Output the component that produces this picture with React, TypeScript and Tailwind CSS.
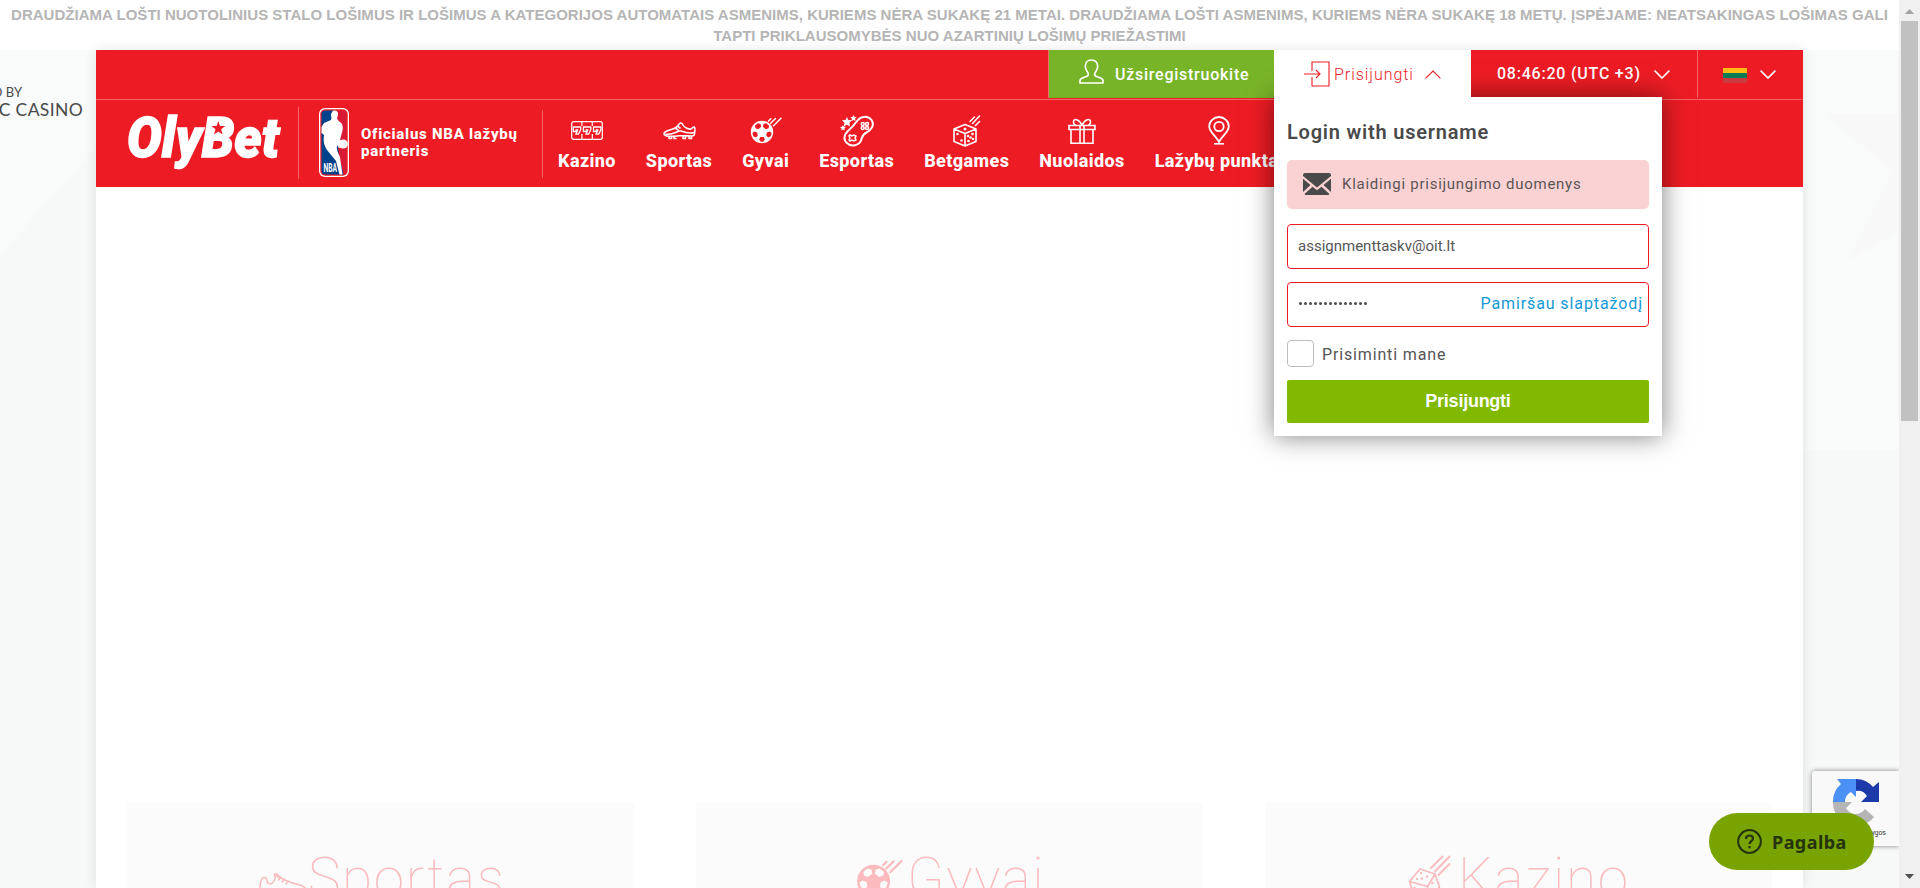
import React from "react";

const KazinoIcon = () => (
  <svg width="32" height="19" viewBox="0 0 32 19" fill="none" stroke="white" strokeWidth="1.2">
    <rect x="0.7" y="0.7" width="30.6" height="17.6" rx="2" />
    <path d="M10.900 1v4m0 8v5M21.300 1v4m0 8v5" />
    <g strokeWidth="1.300" strokeLinejoin="round">
      <path d="M2.300 6h7.400v2.500L7.500 13.200H4.800L6.800 9H5v1.500H2.300z" />
      <path d="M12.400 6h7.400v2.500l-2.200 4.700h-2.700l2-4.200h-1.800v1.500h-2.700z" />
      <path d="M22.500 6h7.400v2.500l-2.200 4.700H25l2-4.200h-1.800v1.500h-2.700z" />
    </g>
  </svg>
);

const ShoeIcon = () => (
  <svg width="33" height="18" viewBox="0 0 33 18" fill="none" stroke="white" strokeWidth="1.6" strokeLinejoin="round" strokeLinecap="round">
    <path d="M1 11.500C2 8 9 8.500 13 5.500 15 4 16 1.500 17.500 1c1.500-.4 2 .7 2.500 2 1.500 3 6 4.500 8 4 1.500-.5 2-2.500 3.300-2 .9.600.5 5 .2 7-.2 1.500-1 2-2.500 2-5 0-8-.5-13-.2-5 .4-15 1.700-15-2.300z" />
    <path d="M3 12.200c8 1 11-3.700 15-3.200 4 1.500 8 3 13 1.500M13 6.500l2 1.500M15 4.500l2 1.500" />
    <path d="M6 14.500v2h2.500v-2M11 14.500v2h2M20 14.500v2h2.500v-2M26 14.500v2h2.500v-2" strokeWidth="1.600" />
  </svg>
);

const SneakerIcon = () => (
  <svg className="mt-[29px] shrink-0" width="50" height="34" viewBox="0 0 50 34" fill="none" stroke="currentColor" strokeWidth="1.500" strokeLinejoin="round" strokeLinecap="round">
    <path d="M2 24C1.500 17 2 12 4 7c3-1.500 5 0 5 2.500 0 3 3 4.500 5.500 2.500C17.500 9 18 6.500 16.500 4.500c-.7-1.500.8-2.500 2.300-1.500 3.500 5 9.500 7 14.500 8.500 4.500 2 9.500 2 12.500 4.500 4 2 3.500 8 1 8z" />
    <path d="M20.500 9l2.500-3M24 11l2.500-3M28 13l2-3M18 4.500l4 3" />
  </svg>
);

const BallIcon = ({ className = "", id }: { className?: string; id: string }) => (
  <svg className={className} width="32" height="27" viewBox="0 0 32 27" fill="none" stroke="currentColor" strokeWidth="1.500">
    <mask id={id}>
      <rect width="32" height="27" fill="white" stroke="none" />
      <g fill="black" stroke="none">
        <path d="M8 6.300l2.500.8.700 2.700-3 2.400-2.800-1L5 8.500zM16 6.300l-2.500.8-.7 2.700 3 2.400 2.800-1L19 8.500z" />
        <path d="M4.300 14.500l2.800 1 .7 3.200-2 1.700-2.500-1.200-.9-3.200zM19.700 14.500l-2.800 1-.7 3.200 2 1.700 2.500-1.200.9-3.200zM10.300 20h3.400l1.200 2.800L13 24.700h-2l-1.900-1.900z" />
      </g>
    </mask>
    <circle cx="12" cy="15" r="11.200" fill="currentColor" stroke="none" mask={`url(#${id})`} />
    <path d="M18.500 4l2.300-2.300M20.700 6.300L25.500 1.500M23.500 8.800L31 1.200" strokeLinecap="round" />
  </svg>
);

const GamepadIcon = () => (
  <svg width="34" height="32" viewBox="0 0 34 32" fill="none" stroke="white" strokeWidth="2">
    <path d="M17.500 5.500C21 1 28 .500 31.500 5c3.500 5-.5 10.500-5 12.500-4.500 2-4 4-5.500 8-2 5-9.500 6.500-13.500 3C3.500 25.500 3.500 20.500 7 17c4-3.500 7.500-7.500 10.500-11.500z" />
    <g strokeWidth="1.500">
      <circle cx="22.700" cy="9" r="1.500" /><circle cx="27" cy="9" r="1.500" />
      <circle cx="22.700" cy="13" r="1.500" /><circle cx="27" cy="13" r="1.500" />
      <path d="M10 20l2 1 2-1 2 1-1 2 1 2-2 1-2-1-2 1-1-1 1-2-1-2z" />
    </g>
    <path fill="white" stroke="none" d="M7 2l1.400 3 3.600.300-2.600 2.500.7 3.600L7 9.700l-3.200 1.700.7-3.600L1.900 5.300 5.500 5zM13.500 0l1 2 2.200.300-1.600 1.500.4 2.200-2-1-2 1 .4-2.200-1.600-1.500 2.200-.3zM3 10l.9 1.800 2 .3-1.500 1.400.4 2L3 14.500l-1.800 1 .4-2L0 12.100l2-.3z" />
  </svg>
);

const DiceIcon = () => (
  <svg width="28" height="32" viewBox="0 0 28 32" fill="none" stroke="white" strokeWidth="1.600" strokeLinejoin="round" strokeLinecap="round">
    <path d="M12 9.500L23 14v12.500L12 31 1 26.500V14zM1 14l11 4.500L23 14M12 18.500V31" />
    <path d="M17 6.500L21.500 2M19.500 8.500L26.500 1M22.500 10.500l4-4" strokeWidth="1.500" />
    <g fill="white" stroke="none">
      <circle cx="12" cy="14" r="1.500" /><circle cx="4.500" cy="19" r="1.300" /><circle cx="8.500" cy="25.500" r="1.300" />
      <circle cx="19.500" cy="19" r="1.300" /><circle cx="17.500" cy="22.500" r="1.300" /><circle cx="15.500" cy="26" r="1.300" /><circle cx="20" cy="24" r="1.200" /><circle cx="15" cy="21" r="1.200" />
    </g>
  </svg>
);

const RollingDiceIcon = () => (
  <svg className="mt-[13px] mr-[7px] shrink-0" width="43" height="46" viewBox="0 0 43 46" fill="none" stroke="currentColor" strokeWidth="1.700" strokeLinejoin="round" strokeLinecap="round">
    <path d="M1.500 26.500L12 14l15 5-7.500 12.500zM27 19l4.500 13L22 43l-2.500-11.500M1.500 26.500L6 40l16 3" />
    <path d="M23 13L34.500 1.500M27 16.500L41.500 1.500M30.500 20L41.500 9" strokeWidth="1.900" />
    <g fill="currentColor" stroke="none">
      <circle cx="13" cy="18" r="1.200" /><circle cx="19" cy="21.500" r="1.200" /><circle cx="9" cy="24" r="1.200" /><circle cx="14" cy="23.500" r="1.200" />
      <circle cx="24.500" cy="28" r="1.200" /><circle cx="6.500" cy="33" r="1.200" /><circle cx="14" cy="36" r="1.200" />
    </g>
  </svg>
);

const GiftIcon = () => (
  <svg width="28" height="26" viewBox="0 0 28 26" fill="none" stroke="white" strokeWidth="1.600">
    <path d="M1 7.500h26v4H1zM3 11.500h22v13.700H3zM12 8v17M16 8v17M14 7C11 1 6 0 5.500 3.500 5.300 6 7 7 8 7M14 7c3-6 8-7 8.500-3.500C22.700 6 21 7 20 7" />
  </svg>
);

const PinIcon = () => (
  <svg width="22" height="29" viewBox="0 0 22 29" fill="none" stroke="white" strokeWidth="1.800">
    <path d="M11 26C8 20 1.200 16 1.200 10.500a9.800 9.500 0 0 1 19.600 0C20.800 16 14 20 11 26z" />
    <circle cx="11" cy="10.500" r="4.700" />
    <path d="M6 27.800h10" strokeWidth="1.600" />
  </svg>
);

const Chevron = ({ up = false }: { up?: boolean }) => (
  <svg width="16" height="9" viewBox="0 0 16 9" fill="none" stroke="currentColor" strokeWidth={up ? 1.1 : 1.6}>
    <path d={up ? "M.6 8.400L8 1l7.400 7.400" : "M.6.600L8 8 15.400.600"} />
  </svg>
);

const OlyBetLogo = () => (
  <svg width="160" height="62" viewBox="0 0 160 62" className="shrink-0">
    <text x="-1" y="45" fontFamily="Roboto, sans-serif" fontStyle="italic" fontWeight="900" fontSize="56" textLength="152" lengthAdjust="spacingAndGlyphs" fill="white" stroke="white" strokeWidth="1.500">OlyBet</text>
    <circle cx="90" cy="16.500" r="8" fill="white" />
    <path fill="#ed1c24" d="M90.300 9l1.700 5h5.300l-4.200 3.300 1.500 5.200-4.300-3.100-4.300 3.100 1.500-5.200L83.300 14h5.300z" />
  </svg>
);

const NbaLogo = () => (
  <svg width="30" height="69" viewBox="0 0 30 69" className="mt-px shrink-0">
    <rect width="30" height="69" rx="6" fill="white" />
    <rect x="1.300" y="1.300" width="27.400" height="66.400" rx="5" fill="#ed1c24" />
    <path d="M6.500 2.500H16L20 35l4.500 31.500h-18a4 4 0 0 1-4-4v-56a4 4 0 0 1 4-4z" fill="#00438c" />
    <path d="M15 2.500h9a3.500 3.500 0 0 1 3.500 3.500v56.500a4 4 0 0 1-3 4L20 48z" fill="#d91a35" />
    <path d="M14 2.500c3-.500 5.500 1 5 4L18 10.500l2 3c3 1 4.500 4.500 3.500 9L21 32l3 1.500v5L20 40l-2-3c-1 4 1 8 3 12l2.500 17.500h-3L17 53 8 42c-3-4-4-9-3-15l-2.500-2v-6L5 15l7-3c1-2 0-3 0-6z" fill="white" />
    <circle cx="24.300" cy="36" r="4.600" fill="white" />
    <text x="4.500" y="63.500" fontFamily="Roboto, sans-serif" fontWeight="700" fontSize="13" textLength="13.500" lengthAdjust="spacingAndGlyphs" fill="white">NBA</text>
  </svg>
);

const NavItem = ({ icon, label }: { icon: React.ReactNode; label: string }) => (
  <a className="flex shrink-0 flex-col items-center px-[15px] text-white">
    <span className="flex h-[35px] items-center justify-center">{icon}</span>
    <span className="whitespace-nowrap text-[18px] leading-[26px] font-[850] tracking-[0.400px]">{label}</span>
  </a>
);

const Tile = ({ icon, label, pad }: { icon: React.ReactNode; label: string; pad: string }) => (
  <section className={`flex h-[85px] w-[507px] overflow-hidden bg-[#fbfbfb] pt-[39px] text-[#fbbabd] ${pad}`}>
    {icon}
    <span className="mt-px text-[55px] leading-[70px] font-[270] tracking-[1.600px]">{label}</span>
  </section>
);

const LoginPanel = () => (
  <div className="absolute top-[47px] left-0 h-[339px] w-[388px] bg-white px-[13px] pt-[21px] text-[#4a4a4a] shadow-[0_0_25px_rgba(0,0,0,0.5)]">
    <h2 className="text-[20px] leading-[28px] font-[600] tracking-[0.780px]">Login with username</h2>
    <div className="mt-[14px] flex h-[49px] items-center rounded-[5px] bg-[#fbd2d3] pl-4">
      <svg className="-mt-px" width="28" height="22" viewBox="0 0 28 22" fill="#4a4a4a">
        <path d="M2 0h24a2 2 0 0 1 2 2v1L14 14.500 0 3V2a2 2 0 0 1 2-2zM0 5.700l7.500 6.300L0 19zM28 5.700L20.500 12l7.500 7zM1.500 21l8-7.300 4.500 3.500 4.500-3.500 8 7.300-1 1h-23z" />
      </svg>
      <span className="ml-[11px] text-[15px] tracking-[0.730px] text-[#5a5555]">Klaidingi prisijungimo duomenys</span>
    </div>
    <div className="mt-[15px] flex h-[45px] items-center rounded-[4px] border border-[#ed1c24] px-[10px] text-[15px] text-[#555]">
      assignmenttaskv@oit.lt
    </div>
    <div className="mt-[13px] flex h-[45px] items-center justify-between rounded-[4px] border border-[#ed1c24] pr-[5px] pb-[2px] pl-[11px]">
      <span className="flex gap-[2px]">
        {Array.from({ length: 14 }, (_, i) => (
          <i key={i} className="size-[3px] rounded-full bg-[#4a4a4a]" />
        ))}
      </span>
      <span className="text-[16px] tracking-[0.900px] text-[#1499d6]">Pamiršau slaptažodį</span>
    </div>
    <div className="mt-[13px] flex h-[27px] items-center gap-2">
      <span className="size-[27px] rounded-[4px] border border-[#bdbdbd]" />
      <span className="mt-[2px] text-[16px] tracking-[0.850px] text-[#555]">Prisiminti mane</span>
    </div>
    <div className="mt-[13px] flex h-[43px] items-center justify-center rounded-[2px] bg-[#80b900] text-[18px] font-bold tracking-[-0.250px] text-white [font-family:'Liberation_Sans',sans-serif]">
      Prisijungti
    </div>
  </div>
);

export default function App() {
  return (
    <div className="relative flex h-[888px] w-[1920px] overflow-hidden bg-white [font-family:Roboto,sans-serif]">
      <div className="flex w-[1899px] flex-col">
        <p className="h-[50px] pt-[4px] text-center text-[15px] leading-[21px] font-bold tracking-[0.015px] whitespace-nowrap text-[#b5b5b5] [font-family:'Liberation_Sans',sans-serif]">
          DRAUDŽIAMA LOŠTI NUOTOLINIUS STALO LOŠIMUS IR LOŠIMUS A KATEGORIJOS AUTOMATAIS ASMENIMS, KURIEMS NĖRA SUKAKĘ 21 METAI. DRAUDŽIAMA LOŠTI ASMENIMS, KURIEMS NĖRA SUKAKĘ 18 METŲ. ĮSPĖJAME: NEATSAKINGAS LOŠIMAS GALI
          <br />
          TAPTI PRIKLAUSOMYBĖS NUO AZARTINIŲ LOŠIMŲ PRIEŽASTIMI
        </p>
        <div className="relative flex h-[838px] bg-[#f7f9f8]">
          <aside className="relative w-24 overflow-hidden">
            <svg className="absolute inset-0" width="96" height="838">
              <path d="M0 0h96v98L0 205z" fill="#f9fbfa" />
            </svg>
            <div className="relative flex flex-col items-end pt-[33px] text-[#4a4a4a] [font-family:Lato,sans-serif]">
              <span className="mr-[74px] text-[13px] leading-[18px] whitespace-nowrap">POWERED BY</span>
              <span className="mr-[13px] text-[17.500px] leading-[18px] tracking-[0.350px] whitespace-nowrap">OLYMPIC CASINO</span>
            </div>
          </aside>
          <main className="relative z-10 flex w-[1707px] flex-col bg-white shadow-[0_0_12px_rgba(0,0,0,0.1)]">
            <header className="flex h-[137px] flex-col bg-[#ed1c24]">
              <div className="relative z-20 flex h-[50px] justify-end border-b border-[#f5656b] text-white">
                <div className="flex h-12 w-[226px] items-center border-l border-[#f5656b] bg-[#78b428] pl-[30px]">
                  <svg className="-mt-[5px]" width="25" height="25" viewBox="0 0 25 25" fill="none" stroke="white" strokeWidth="1.700" strokeLinejoin="round">
                    <path d="M12.500 1C8.500 1 6.300 3.700 6.300 7.200c0 3 1.700 5 2.700 6.800.8 1.700.3 2.800-1.500 3.500-3 1.200-6.300 1.500-6.500 4v2.500h23v-2.500c-.2-2.500-3.500-2.800-6.500-4-1.800-.7-2.300-1.800-1.500-3.500 1-1.800 2.700-3.800 2.700-6.800C18.700 3.700 16.500 1 12.500 1z" />
                  </svg>
                  <span className="mt-[2px] ml-[11px] text-[16px] font-medium tracking-[0.750px]">Užsiregistruokite</span>
                </div>
                <div className="relative h-12 w-[197px]">
                  <LoginPanel />
                  <div className="relative flex h-full items-center bg-white pl-[30px] text-[#ed1c24]">
                    <svg width="26" height="26" viewBox="0 0 26 26" fill="none" stroke="currentColor" strokeWidth="1.100">
                      <path d="M8 10V1h17v24H8v-9M0 13h16M12 9l4 4-4 4" />
                    </svg>
                    <span className="mt-[2px] ml-[4px] text-[16px] font-[360] tracking-[0.950px]">Prisijungti</span>
                    <span className="ml-[11px]"><Chevron up /></span>
                  </div>
                </div>
                <div className="flex h-12 w-[226px] items-center pl-[26px]">
                  <span className="text-[16px] font-medium tracking-[0.780px] whitespace-nowrap">08:46:20 (UTC +3)</span>
                  <span className="ml-[13px]"><Chevron /></span>
                </div>
                <div className="flex h-12 w-[106px] items-center border-l border-[#f5656b] pl-[25px]">
                  <span className="mt-[3px] flex h-[15px] w-6 flex-col">
                    <i className="h-[5px] bg-[#fdbb13]" />
                    <i className="h-[5px] bg-[#087b57]" />
                    <i className="h-[5px] bg-[#c93b3d]" />
                  </span>
                  <span className="ml-[13px]"><Chevron /></span>
                </div>
              </div>
              <div className="flex h-[87px] overflow-hidden">
                <div className="flex w-[202px] pt-[12px] pl-8"><OlyBetLogo /></div>
                <div className="mt-[7px] flex h-[72px] w-[244px] border-l border-[#f5656b] pl-5">
                  <NbaLogo />
                  <p className="mt-[19px] ml-[12px] text-[15px] leading-[17px] font-[800] tracking-[0.740px] whitespace-nowrap text-white">Oficialus NBA lažybų<br />partneris</p>
                </div>
                <nav className="mt-[10px] flex h-[68px] border-l border-[#f5656b] pt-[3px]">
                  <NavItem icon={<KazinoIcon />} label="Kazino" />
                  <NavItem icon={<ShoeIcon />} label="Sportas" />
                  <NavItem icon={<BallIcon id="nav-ball" className="text-white" />} label="Gyvai" />
                  <NavItem icon={<GamepadIcon />} label="Esportas" />
                  <NavItem icon={<DiceIcon />} label="Betgames" />
                  <NavItem icon={<GiftIcon />} label="Nuolaidos" />
                  <NavItem icon={<PinIcon />} label="Lažybų punktai" />
                </nav>
              </div>
            </header>
            <div className="mt-[616px] flex justify-between px-[31px]">
              <Tile label="Sportas" pad="pl-[131px]" icon={<SneakerIcon />} />
              <Tile label="Gyvai" pad="pl-[160px]" icon={<BallIcon id="tile-ball" className="mt-[17px] mr-[4px] h-[40px] w-[47px] shrink-0" />} />
              <Tile label="Kazino" pad="pl-[143px]" icon={<RollingDiceIcon />} />
            </div>
          </main>
          <aside className="relative flex-1 overflow-hidden">
            <svg width="96" height="838">
              <path d="M0 0h96v838H0z" fill="#f9fbfa" />
              <path d="M23 64h73v117L46 210 89 121z" fill="#f7f8f7" />
              <path d="M0 400h96v438H0z" fill="#f7f9f8" />
            </svg>
          </aside>
          <div className="absolute top-[721px] right-0 z-20 h-[75px] w-[87px] rounded-l-[3px] bg-[#f9f9f9] shadow-[0_0_5px_gray] [clip-path:inset(-8px_0_-8px_-8px)]">
            <svg className="absolute top-[8px] left-[21px]" width="46" height="46" viewBox="0 0 46 46">
              <path fill="#4a90f5" d="M0 23A23 23 0 0 1 8 5L4 0h19v18l-5-5a11 11 0 0 0-6 10z" />
              <path fill="#1c3aa9" d="M23 0a23 23 0 0 1 17 8l6-5v20H28l6-6a11 11 0 0 0-11-5z" />
              <path fill="#b5b5b5" d="M0 23h19l-6 6a11 11 0 0 0 19 1l9 8A23 23 0 0 1 0 23z" />
            </svg>
            <span className="absolute top-[57px] right-[13px] text-[7px] leading-[10px] whitespace-nowrap text-[#333]">Sąlygos</span>
          </div>
          <div className="absolute top-[763px] left-[1709px] z-30 flex h-[57px] w-[165px] items-center rounded-full bg-[#78a300] pl-7 text-[#25330f]">
            <svg width="25" height="25" viewBox="0 0 25 25" fill="none" stroke="currentColor" strokeWidth="2">
              <circle cx="12.500" cy="12.500" r="11.400" />
              <path d="M9 10c0-2.300 1.500-3.500 3.500-3.500S16 7.700 16 9.500c0 2.500-3.500 2.700-3.500 5.500M12.500 17v2.200" strokeWidth="2.200" />
            </svg>
            <span className="mt-[2px] ml-[10px] text-[18px] font-bold tracking-[0.450px] [font-family:'Noto_Sans',sans-serif]">Pagalba</span>
          </div>
        </div>
      </div>
      <div className="flex h-full w-[21px] flex-col items-center bg-[#f0f0f0]">
        <svg className="mt-[9px]" width="9" height="5"><path d="M0 5l4.500-5L9 5z" fill="#a3a3a3" /></svg>
        <div className="mt-[7px] h-[400px] w-[17px] bg-[#c1c1c1]" />
        <svg className="mt-auto mb-[9px]" width="9" height="5"><path d="M0 0h9L4.500 5z" fill="#505050" /></svg>
      </div>
    </div>
  );
}
